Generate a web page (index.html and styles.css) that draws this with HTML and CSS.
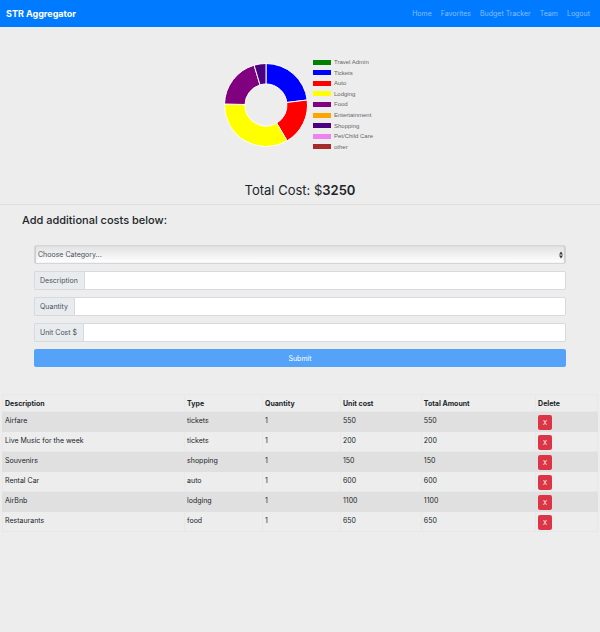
FILE: index.html
```html
<!DOCTYPE html>
<html lang="en">
<head>
<meta charset="utf-8">
<meta name="viewport" content="width=device-width, initial-scale=1">
<title>STR Aggregator</title>
<link rel="stylesheet" href="styles.css">
</head>
<body>
<header class="navbar">
  <a class="brand" href="#">STR Aggregator</a>
  <nav class="nav">
    <a href="#">Home</a>
    <a href="#">Favorites</a>
    <a href="#">Budget Tracker</a>
    <a href="#">Team</a>
    <a href="#">Logout</a>
  </nav>
</header>
<main>
  <section class="summary">
    <div class="chart">
      <svg class="donut" viewBox="-42 -42 84 84" aria-hidden="true">
        <g stroke="#fff" stroke-width="1" stroke-linejoin="round">
          <path fill="#00f" d="M0-41.5A41.5 41.5 0 0 1 41.2-5L20.8-2.5A21 21 0 0 0 0-21Z"/>
          <path fill="red" d="M41.2-5A41.5 41.5 0 0 1 21.1 35.8L10.7 18.1A21 21 0 0 0 20.8-2.5Z"/>
          <path fill="#ff0" d="M21.1 35.8A41.5 41.5 0 0 1-41.5-1L-21-.5A21 21 0 0 0 10.7 18.1Z"/>
          <path fill="purple" d="M-41.5-1A41.5 41.5 0 0 1-11.9-39.8L-6-20.1A21 21 0 0 0-21-.5Z"/>
          <path fill="indigo" d="M-11.9-39.8A41.5 41.5 0 0 1 0-41.5L0-21A21 21 0 0 0-6-20.1Z"/>
        </g>
      </svg>
      <ul class="legend">
        <li><span class="swatch travel"></span>Travel Admin</li>
        <li><span class="swatch tickets"></span>Tickets</li>
        <li><span class="swatch auto"></span>Auto</li>
        <li><span class="swatch lodging"></span>Lodging</li>
        <li><span class="swatch food"></span>Food</li>
        <li><span class="swatch entertainment"></span>Entertainment</li>
        <li><span class="swatch shopping"></span>Shopping</li>
        <li><span class="swatch care"></span>Pet/Child Care</li>
        <li><span class="swatch other"></span>other</li>
      </ul>
    </div>
    <p class="total">Total Cost: $<strong>3250</strong></p>
  </section>
  <section class="costs">
    <h1>Add additional costs below:</h1>
    <form class="cost-form">
      <div class="select-wrap">
        <select class="category" aria-label="Category">
          <option>Choose Category...</option>
          <option>Travel Admin</option>
          <option>Tickets</option>
          <option>Auto</option>
          <option>Lodging</option>
          <option>Food</option>
        </select>
        <svg class="arrows" viewBox="0 0 4 8" aria-hidden="true"><path fill="#343a40" d="M0 3.4 2 .6 4 3.4ZM0 4.6 2 7.4 4 4.6Z"/></svg>
      </div>
      <div class="field"><label for="description">Description</label><input id="description" type="text"></div>
      <div class="field"><label for="quantity">Quantity</label><input id="quantity" type="text"></div>
      <div class="field"><label for="unit-cost">Unit Cost $</label><input id="unit-cost" type="text"></div>
      <button class="submit" type="submit">Submit</button>
    </form>
  </section>
  <div class="table-wrap">
    <table>
      <colgroup><col class="c-desc"><col class="c-type"><col class="c-qty"><col class="c-unit"><col class="c-total"><col class="c-delete"></colgroup>
      <thead>
        <tr><th>Description</th><th>Type</th><th>Quantity</th><th>Unit cost</th><th>Total Amount</th><th>Delete</th></tr>
      </thead>
      <tbody>
        <tr><td>Airfare</td><td>tickets</td><td>1</td><td>550</td><td>550</td><td><button class="delete" type="button">X</button></td></tr>
        <tr><td>Live Music for the week</td><td>tickets</td><td>1</td><td>200</td><td>200</td><td><button class="delete" type="button">X</button></td></tr>
        <tr><td>Souvenirs</td><td>shopping</td><td>1</td><td>150</td><td>150</td><td><button class="delete" type="button">X</button></td></tr>
        <tr><td>Rental Car</td><td>auto</td><td>1</td><td>600</td><td>600</td><td><button class="delete" type="button">X</button></td></tr>
        <tr><td>AirBnb</td><td>lodging</td><td>1</td><td>1100</td><td>1100</td><td><button class="delete" type="button">X</button></td></tr>
        <tr><td>Restaurants</td><td>food</td><td>1</td><td>650</td><td>650</td><td><button class="delete" type="button">X</button></td></tr>
      </tbody>
    </table>
  </div>
</main>
</body>
</html>
```
FILE: styles.css
```css
* { box-sizing: border-box; }

body {
  margin: 0;
  background: #ededed;
  color: #212529;
  font-family: Inter, "Liberation Sans", sans-serif;
  font-size: 7px;
  line-height: 11px;
}

a { text-decoration: none; }
input, select, button { font: inherit; }

.navbar {
  display: flex;
  align-items: center;
  justify-content: space-between;
  height: 27px;
  padding: 0 10px 0 6px;
  background: #007bff;
}

.brand {
  color: #fff;
  font-size: 9px;
  font-weight: 700;
}

.nav { display: flex; gap: 9px; }
.nav a { color: rgba(255, 255, 255, 0.5); }

.summary {
  padding: 30px 0 6px;
  border-bottom: 1px solid #dfdfdf;
}

.chart {
  display: flex;
  justify-content: center;
  align-items: center;
  gap: 5px;
  padding-right: 3px;
}

.donut { width: 84px; }

.legend {
  display: grid;
  grid-auto-rows: 1fr;
  height: 95px;
  margin: 0;
  padding: 0;
  list-style: none;
  color: #666;
  font-family: "Liberation Sans", sans-serif;
  font-size: 6px;
  line-height: 10px;
}

.legend li { display: flex; align-items: center; gap: 3px; }
.swatch { width: 18px; height: 5px; }
.travel { background: green; }
.tickets { background: blue; }
.auto { background: red; }
.lodging { background: yellow; }
.food { background: purple; }
.entertainment { background: orange; }
.shopping { background: indigo; }
.care { background: violet; }
.other { background: brown; }

.total {
  margin: 30px 0 0;
  font-size: 13px;
  line-height: 16px;
  text-align: center;
}

.total strong { font-weight: 600; }

.costs { padding: 8px 22px 0; }

h1 {
  margin: 0;
  font-size: 11px;
  font-weight: 500;
  line-height: 14px;
}

.cost-form {
  display: grid;
  gap: 7px;
  margin: 18px 12px 0;
}

.select-wrap { display: grid; align-items: center; }
.select-wrap > * { grid-area: 1 / 1; }

.category {
  height: 19px;
  width: 100%;
  padding: 0 3px;
  appearance: none;
  border: 1px solid #d3d7da;
  border-radius: 2px;
  background: linear-gradient(#e2e2e2, #fff);
  box-shadow: inset 1px 0 1px #ccc, inset -1px 0 1px #ccc;
  color: #495057;
}

.arrows {
  justify-self: end;
  width: 4px;
  height: 8px;
  margin-right: 3px;
  pointer-events: none;
}

.field { display: flex; height: 19px; }

.field label {
  display: flex;
  align-items: center;
  padding: 0 6px 0 5px;
  border: 1px solid #d6dade;
  border-right: 0;
  border-radius: 2px 0 0 2px;
  background: #e9ecef;
  color: #495057;
}

.field input {
  flex: 1;
  min-width: 0;
  padding: 0 5px;
  border: 1px solid #d6dade;
  border-radius: 0 2px 2px 0;
  background: #fff;
}

.submit {
  height: 18px;
  padding: 0;
  border: 0;
  border-radius: 2px;
  background: #54a3f9;
  color: #fff;
}

.table-wrap { padding: 27px 2px 0; }

table {
  width: 100%;
  table-layout: fixed;
  border-collapse: collapse;
}

.c-desc { width: 30.6%; }
.c-type { width: 13.1%; }
.c-qty { width: 13.1%; }
.c-unit { width: 13.6%; }
.c-total { width: 19.2%; }

th, td {
  padding: 2px;
  border: 1px solid #e6e8ea;
  text-align: left;
  vertical-align: top;
}

th { height: 17px; font-weight: 700; vertical-align: middle; }
td { height: 20px; padding-top: 3px; padding-bottom: 1px; }
tbody tr:nth-child(odd) { background: #e0e0e0; }
tbody tr:nth-child(odd) td { border-color: #e0e0e0; }

.delete {
  display: block;
  width: 14px;
  height: 15px;
  padding: 0;
  border: 0;
  border-radius: 2px;
  background: #dc3545;
  color: #fff;
  font-size: 6px;
}
```
